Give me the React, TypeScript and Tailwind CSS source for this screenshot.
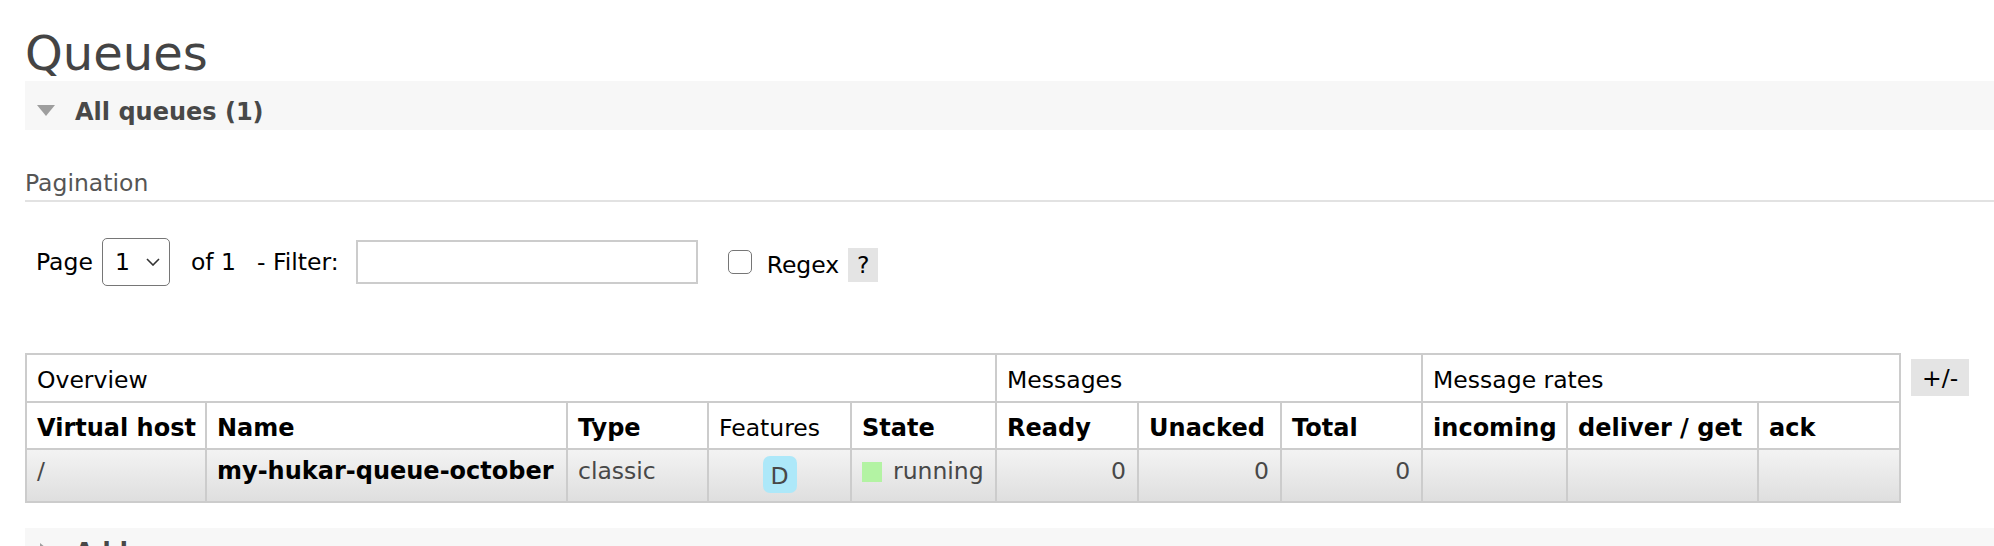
import React from "react";

const cols = [180, 361, 141, 143, 145, 142, 143, 141, 145, 191, 142];

function DownTriangle() {
  return (
    <svg width="18" height="11" viewBox="0 0 18 11" className="mt-[7px] shrink-0">
      <polygon points="0,0 18,0 9,11" fill="#9e9e9e" />
    </svg>
  );
}

function RightTriangle() {
  return (
    <svg width="11" height="18" viewBox="0 0 11 18" className="mt-[5px] ml-[3px] shrink-0">
      <polygon points="0,0 11,9 0,18" fill="#9e9e9e" />
    </svg>
  );
}

export default function App() {
  const th1 = "border-r-2 border-b-2 border-[#cccccc] pl-[10px] pt-[11px] pb-[7px] text-left align-top font-normal leading-[28px] text-black";
  const th2 = "border-r-2 border-b-2 border-[#cccccc] pl-[10px] pt-[11px] pb-[6px] text-left align-top leading-[28px] text-black";
  const td = "border-r-2 border-b-2 border-[#cccccc] pt-[7px] pb-[16px] align-top leading-[28px]";
  return (
    <div className="h-[546px] w-full overflow-hidden bg-white pl-[25px] font-['DejaVu_Sans',Verdana,sans-serif] text-[23.5px] text-black">
      <h1 className="pt-[25px] text-[48px] leading-[56px] font-normal text-[#444444]">Queues</h1>

      <div className="flex h-[49px] items-start bg-[#f7f7f7] pt-[17px] pl-[12px]">
        <DownTriangle />
        <span className="ml-[20px] text-[24px] font-bold leading-[28px] text-[#484848]">All queues (1)</span>
      </div>

      <h3 className="mt-[39px] border-b-2 border-[#e2e2e2] pb-[3px] text-[23.5px] font-normal leading-[28px] text-[#555555]">
        Pagination
      </h3>

      <div className="mt-[36px] flex h-[48px] items-center pl-[11px]">
        <span className="leading-[28px]">Page</span>
        <div className="ml-[9px] flex h-[48px] w-[68px] items-center justify-between rounded-[5px] border border-[#767676] pl-[12px] pr-[9px]">
          <span className="leading-[28px]">1</span>
          <svg width="14" height="8" viewBox="0 0 14 8">
            <polyline points="1,1 7,7 13,1" fill="none" stroke="#333333" strokeWidth="1.6" />
          </svg>
        </div>
        <span className="ml-[21px] leading-[28px]">of 1</span>
        <span className="ml-[21px] leading-[28px]">- Filter:</span>
        <div className="ml-[17px] h-[44px] w-[342px] border-2 border-[#cccccc] bg-white" />
        <div className="ml-[30px] h-[24px] w-[24px] rounded-[5px] border-[1.5px] border-[#767676] bg-white" />
        <span className="ml-[15px] mt-[6px] leading-[28px]">Regex</span>
        <span className="ml-[9px] mt-[6px] flex h-[34px] w-[30px] items-center justify-center bg-[#e4e4e4] leading-[28px]">?</span>
      </div>

      <div className="mt-[67px] flex items-start">
        <table className="table-fixed border-separate border-spacing-0 border-t-2 border-l-2 border-[#cccccc]" style={{ width: 1876 }}>
          <colgroup>
            {cols.map((w, i) => (
              <col key={i} style={{ width: w }} />
            ))}
          </colgroup>
          <thead>
            <tr>
              <th colSpan={5} className={th1}>Overview</th>
              <th colSpan={3} className={th1}>Messages</th>
              <th colSpan={3} className={th1}>Message rates</th>
            </tr>
            <tr className="text-[24px]">
              <th className={th2 + " font-bold"}>Virtual host</th>
              <th className={th2 + " font-bold"}>Name</th>
              <th className={th2 + " font-bold"}>Type</th>
              <th className={th2 + " font-normal text-[23.5px]"}>Features</th>
              <th className={th2 + " font-bold"}>State</th>
              <th className={th2 + " font-bold"}>Ready</th>
              <th className={th2 + " font-bold"}>Unacked</th>
              <th className={th2 + " font-bold"}>Total</th>
              <th className={th2 + " font-bold"}>incoming</th>
              <th className={th2 + " font-bold"}>deliver / get</th>
              <th className={th2 + " font-bold"}>ack</th>
            </tr>
          </thead>
          <tbody>
            <tr className="bg-linear-to-b from-[#f3f3f3] to-[#dedede] text-[#484848]">
              <td className={td + " pl-[10px]"}>/</td>
              <td className={td + " pl-[10px] text-[24px] font-bold text-black"}>my-hukar-queue-october</td>
              <td className={td + " pl-[10px]"}>classic</td>
              <td className="border-r-2 border-b-2 border-[#cccccc] pt-[6px] align-top">
                <div className="flex justify-center">
                  <span className="flex h-[37px] w-[34px] items-center justify-center rounded-[7px] bg-[#ade8f9] pt-[2px] leading-[28px] text-[#484848]">
                    D
                  </span>
                </div>
              </td>
              <td className={td + " pl-[10px]"}>
                <div className="flex items-start">
                  <span className="mt-[5px] h-[20px] w-[20px] shrink-0 bg-[#b3f3a3]" />
                  <span className="ml-[11px]">running</span>
                </div>
              </td>
              <td className={td + " pr-[11px] text-right"}>0</td>
              <td className={td + " pr-[11px] text-right"}>0</td>
              <td className={td + " pr-[11px] text-right"}>0</td>
              <td className={td}></td>
              <td className={td}></td>
              <td className={td}></td>
            </tr>
          </tbody>
        </table>
        <div className="ml-[10px] mt-[6px] flex h-[37px] w-[58px] items-center justify-center bg-[#e4e4e4] leading-[28px]">
          +/-
        </div>
      </div>

      <div className="mt-[25px] flex h-[60px] items-start bg-[#f7f7f7] pt-[10px] pl-[12px]">
        <RightTriangle />
        <span className="ml-[24px] text-[24px] font-bold leading-[28px] text-[#484848]">Add a new queue</span>
      </div>
    </div>
  );
}
